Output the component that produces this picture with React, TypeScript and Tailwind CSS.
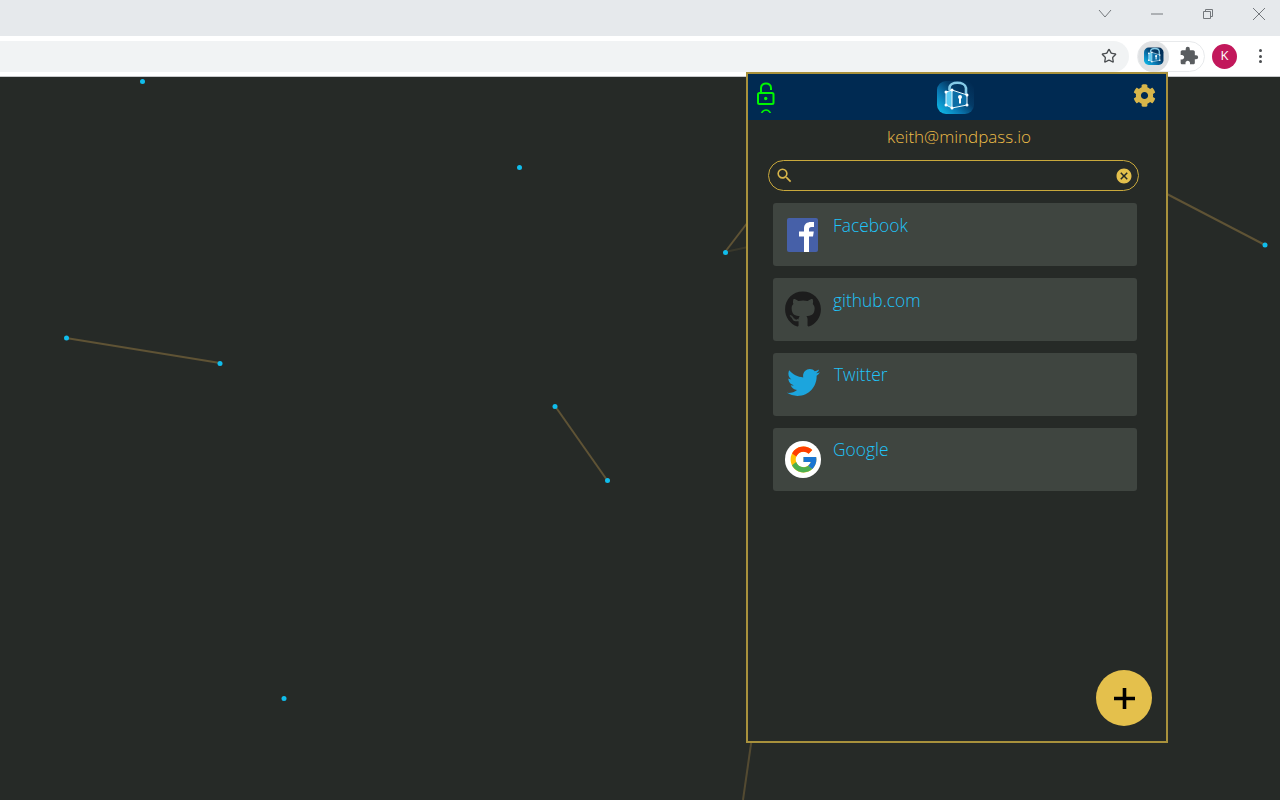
import React from "react";
import { Star } from "lucide-react";
import { FaCog, FaGithub, FaTwitter } from "react-icons/fa";
import { FcGoogle } from "react-icons/fc";
import { MdCancel, MdExtension, MdSearch } from "react-icons/md";

function Logo({ size, id }: { size: number; id: string }) {
  return (
    <svg width={size} height={size} viewBox="0 0 38 38">
      <defs>
        <linearGradient id={id} x1="0" y1="1" x2="1" y2="0.1">
          <stop offset="0" stopColor="#10c6f2" />
          <stop offset="0.35" stopColor="#0a7ab4" />
          <stop offset="0.65" stopColor="#043a66" />
          <stop offset="1" stopColor="#012a52" />
        </linearGradient>
      </defs>
      <rect x="0" y="3" width="37" height="33" rx="9" fill={`url(#${id})`} />
      <path d="M12.5 12 V10 C12.5 3 28 3 29 10 V16" fill="none" stroke="#86cbe8" strokeWidth="2.6" />
      <path d="M9 14 L15 12 L15 30 L9 27 Z" fill="#5ccdf5" />
      <path d="M15 12 L30 17 L30 27 L15 30 Z" fill="#0c6ea6" />
      <path d="M9 14 L15 12 L30 17 L30 27 L15 30 L9 27 Z M15 12 V30" fill="none" stroke="#e8f6fc" strokeWidth="1" />
      <circle cx="9" cy="14" r="1.5" fill="#fff" />
      <circle cx="15" cy="12" r="1.5" fill="#fff" />
      <circle cx="30" cy="17" r="1.5" fill="#fff" />
      <circle cx="15" cy="30" r="1.5" fill="#fff" />
      <circle cx="9" cy="27" r="1.5" fill="#fff" />
      <circle cx="30" cy="27" r="1.5" fill="#fff" />
      <circle cx="23" cy="19" r="2" fill="#fff" />
      <rect x="22" y="19" width="2" height="6.5" fill="#fff" />
    </svg>
  );
}

function OpenLock() {
  return (
    <svg width="20" height="32" viewBox="0 0 20 32" fill="none" stroke="#00f800" strokeWidth="2">
      <path d="M5 12 V7 C5 1 15 1 15 7 V9" />
      <rect x="2" y="12" width="15.5" height="11" rx="1.5" />
      <circle cx="9.7" cy="17.5" r="1.7" fill="#00f800" stroke="none" />
      <path d="M5.5 32 C8 28 12 28 14.5 32" strokeWidth="1.6" />
    </svg>
  );
}

function FacebookIcon() {
  return (
    <svg width="31" height="34" viewBox="0 0 31 34">
      <rect width="31" height="34" rx="2" fill="#4660a8" />
      <path d="M17 34 V18.5 H12 V13.5 H17 V10.5 C17 6 20 4 24 4 H27 V9 H24.5 C22.6 9 22 10 22 11.5 V13.5 H26.8 L26 18.5 H22 V34 Z" fill="#fff" />
    </svg>
  );
}

const items = [
  { name: "Facebook", icon: <FacebookIcon />, gap: "gap-[12px]", text: "mb-[19px]", shift: "mt-[1px] -ml-[1px] mr-[1px]" },
  { name: "github.com", icon: <FaGithub size={37} color="#1c1c1c" />, gap: "gap-[12px]", text: "mb-[19px]", shift: "mt-0" },
  { name: "Twitter", icon: <FaTwitter size={33} color="#1ca5dd" />, gap: "gap-[13px]", text: "mb-[21px]", shift: "-mt-[5px]" },
  {
    name: "Google",
    icon: (
      <span className="flex h-[37px] w-[37px] items-center justify-center rounded-full bg-white">
        <FcGoogle size={31} />
      </span>
    ),
    gap: "gap-[12px]",
    text: "mb-[21px]",
    shift: "mt-0",
  },
];

function Canvas() {
  const dots = [
    [142.5, 4.5], [519.5, 90.5], [725.5, 175.5], [66.5, 261], [220, 286.5], [555, 329.5], [607.5, 403.5], [1265, 168], [284, 621.5],
  ];
  return (
    <svg className="absolute inset-0" width="1280" height="723" viewBox="0 0 1280 723">
      <g stroke="#5f5335" strokeWidth="2" fill="none">
        <path d="M66 261 L220 286" />
        <path d="M555 329 L607 403" />
        <path d="M725 175 L748 145" />
        <path d="M725 175 L748 170" opacity="0.35" />
        <path d="M1165 116 L1265 168" />
        <path d="M752 660 L743 723" opacity="0.8" />
      </g>
      {dots.map(([x, y]) => (
        <circle key={`${x}-${y}`} cx={x} cy={y} r="2.5" fill="#10bdec" />
      ))}
    </svg>
  );
}

export default function App() {
  return (
    <div className="relative flex h-[800px] w-[1280px] flex-col overflow-hidden bg-[#262a27] font-['Open_Sans',sans-serif]">
      <div className="flex h-[36px] items-start justify-end bg-[#e6e9ec] text-[#74787c]">
        <svg className="mr-[39px] mt-[9px]" width="14" height="10" viewBox="0 0 14 10" fill="none" stroke="currentColor" strokeWidth="1">
          <path d="M1 1 L7 8 L13 1" />
        </svg>
        <svg className="mr-[39px] mt-[13px]" width="12" height="2" viewBox="0 0 12 2" stroke="currentColor">
          <path d="M0 1 H12" />
        </svg>
        <svg className="mr-[38px] mt-[8px]" width="12" height="12" viewBox="0 0 12 12" fill="none" stroke="currentColor">
          <path d="M1.5 3.5 H8.5 V10.5 H1.5 Z M3.5 3.5 V1.5 H10.5 V8.5 H8.5" />
        </svg>
        <svg className="mr-[14px] mt-[7px]" width="14" height="14" viewBox="0 0 14 14" fill="none" stroke="currentColor">
          <path d="M1 1 L13 13 M13 1 L1 13" />
        </svg>
      </div>
      <div className="flex h-[41px] items-center border-b border-[#c8cacc] bg-white">
        <div className="flex h-[31px] w-[1129px] items-center justify-end rounded-r-full bg-[#f1f3f4] pr-[12px]">
          <Star size={16} strokeWidth={2} color="#4a4d50" />
        </div>
        <div className="ml-[8px] flex h-[31px] w-[68px] items-center rounded-full border border-[#e8eaec]">
          <span className="flex h-[31px] w-[31px] items-center justify-center rounded-full bg-[#dfe1e3]">
            <Logo size={20} id="logoSmall" />
          </span>
          <MdExtension size={20} color="#5a5d60" className="ml-[10px]" />
        </div>
        <span className="ml-[7px] flex h-[25px] w-[25px] items-center justify-center rounded-full bg-[#c2185b] text-[13px] text-white">K</span>
        <div className="ml-[22px] flex flex-col gap-[2.5px]">
          <span className="h-[3px] w-[3px] rounded-full bg-[#4a4d50]" />
          <span className="h-[3px] w-[3px] rounded-full bg-[#4a4d50]" />
          <span className="h-[3px] w-[3px] rounded-full bg-[#4a4d50]" />
        </div>
      </div>
      <div className="relative flex-1">
        <Canvas />
      </div>

      <div className="absolute left-[746px] top-[72px] flex h-[671px] w-[422px] flex-col border-2 border-[#a8913c] bg-[#262a27]">
        <div className="flex h-[46px] items-center justify-between bg-[#002a52] pl-[8px] pr-[10px]">
          <OpenLock />
          <span className="ml-[3px]"><Logo size={38} id="logoLarge" /></span>
          <FaCog size={23} color="#d8b64a" className="mb-[4px]" />
        </div>
        <div className="mt-[5px] pl-[4px] text-center text-[17px] font-light leading-[24px] text-[#ecbc48]">keith@mindpass.io</div>
        <div className="ml-[20px] mt-[11px] flex h-[31px] w-[371px] items-center justify-between rounded-full border border-[#c9a93c] pl-[6px] pr-[5px]">
          <MdSearch size={19} color="#d8b64a" />
          <MdCancel size={18} color="#e4c04c" />
        </div>
        <div className="ml-[25px] mt-[12px] flex w-[364px] flex-1 flex-col gap-[12px]">
          {items.map((item) => (
            <div key={item.name} className={`flex h-[63px] items-center rounded-[3px] bg-[#3f4540] pl-[12px] ${item.gap}`}>
              <span className={`flex w-[36px] shrink-0 justify-center ${item.shift}`}>{item.icon}</span>
              <span className={`text-[17.4px] font-light leading-[24px] text-[#20c4fa] ${item.text}`}>{item.name}</span>
            </div>
          ))}
        </div>
        <div className="mb-[15px] mr-[14px] flex justify-end">
          <span className="flex h-[56px] w-[56px] items-center justify-center rounded-full bg-[#e4c04c]">
            <svg width="21" height="21" viewBox="0 0 21 21" stroke="#000" strokeWidth="3.6">
              <path d="M10.5 0 V21 M0 10.5 H21" />
            </svg>
          </span>
        </div>
      </div>
    </div>
  );
}
